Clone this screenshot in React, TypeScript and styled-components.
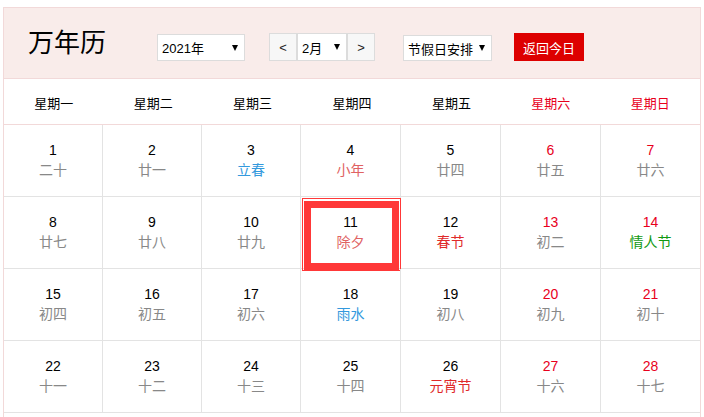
import React from 'react';
import styled, { createGlobalStyle } from 'styled-components';

const GlobalStyle = createGlobalStyle`
	body {
		margin: 0;
		font-family: 'Liberation Sans', 'Noto Sans CJK SC', sans-serif;
		color: #000;
		background: #fff;
	}
`;

const Page = styled.div`
	padding: 7px 3px 0 3px;
`;

const Calendar = styled.div`
	width: 698px;
	box-sizing: border-box;
	border: 1px solid #f2d9d9;
	border-bottom: none;
	padding-bottom: 20px;
`;

const Header = styled.div`
	height: 71px;
	display: flex;
	align-items: flex-end;
	padding: 0 0 17px 24px;
	box-sizing: border-box;
	background: #f9ecea;
	border-bottom: 1px solid #f2d9d9;
`;

const Title = styled.h1`
	margin: 0 0 3px 0;
	font-size: 26px;
	line-height: 30px;
	font-weight: normal;
	letter-spacing: 0;
`;

const Select = styled.div<{ w: number; ml: number; h?: number }>`
	display: flex;
	align-items: center;
	justify-content: space-between;
	box-sizing: border-box;
	width: ${(p) => p.w}px;
	height: ${(p) => p.h || 27}px;
	margin-left: ${(p) => p.ml}px;
	padding: 0 6px 0 4px;
	background: #fff;
	border: 1px solid #dcdcdc;
	font-size: 13px;
`;

const Arrow = styled.span`
	width: 0;
	height: 0;
	border-left: 3.5px solid transparent;
	border-right: 3.5px solid transparent;
	border-top: 6px solid #000;
`;

const MonthGroup = styled.div`
	display: flex;
	margin-left: 24px;
`;

const StepButton = styled.div`
	width: 28px;
	height: 28px;
	box-sizing: border-box;
	display: flex;
	align-items: center;
	justify-content: center;
	background: #f7f7f7;
	border: 1px solid #dcdcdc;
	font-size: 13px;
	color: #222;
`;

const TodayButton = styled.div`
	margin-left: 22px;
	width: 70px;
	height: 28px;
	display: flex;
	align-items: center;
	justify-content: center;
	background: #dd0000;
	color: #fff;
	font-size: 13px;
`;

const WeekRow = styled.div`
	display: grid;
	grid-template-columns: repeat(7, 1fr);
	height: 46px;
	border-bottom: 1px solid #f2d9d9;
	box-sizing: border-box;
`;

const WeekName = styled.div<{ weekend: boolean }>`
	display: flex;
	align-items: center;
	justify-content: center;
	font-size: 13px;
	padding-top: 1px;
	color: ${(p) => (p.weekend ? '#e8001c' : '#000')};
`;

const DayGrid = styled.div`
	display: grid;
	grid-template-columns: 99px 99px 99px 100px 100px 100px 99px;
`;

const Cell = styled.div<{ today: boolean }>`
	position: relative;
	height: 72px;
	box-sizing: border-box;
	border-right: 1px solid #e3e3e3;
	border-bottom: 1px solid #e3e3e3;
	display: flex;
	flex-direction: column;
	align-items: center;
	justify-content: center;
	padding-bottom: 1px;
	&:nth-child(7n) {
		border-right: none;
	}
	${(p) =>
		p.today &&
		`
		&::before {
			content: '';
			position: absolute;
			left: 1px;
			top: 1px;
			width: 99px;
			height: 73px;
			box-sizing: border-box;
			border: 1px solid #ff3838;
		}
		&::after {
			content: '';
			position: absolute;
			left: 3px;
			top: 4px;
			width: 95px;
			height: 69px;
			box-sizing: border-box;
			border: 7px solid #ff3838;
		}
	`}
`;

const DayNum = styled.div<{ weekend: boolean }>`
	font-size: 14px;
	line-height: 20px;
	color: ${(p) => (p.weekend ? '#e8001c' : '#000')};
`;

const kindColor: Record<string, string> = {
	normal: '#888',
	term: '#3399dd',
	soft: '#e06262',
	fest: '#e02a2a',
	green: '#119911',
};

const Lunar = styled.div<{ kind: string }>`
	font-size: 14px;
	line-height: 20px;
	color: ${(p) => kindColor[p.kind]};
`;

const weekNames = ['星期一', '星期二', '星期三', '星期四', '星期五', '星期六', '星期日'];

const days: [string, string][] = [
	['二十', 'normal'], ['廿一', 'normal'], ['立春', 'term'], ['小年', 'soft'], ['廿四', 'normal'], ['廿五', 'normal'], ['廿六', 'normal'],
	['廿七', 'normal'], ['廿八', 'normal'], ['廿九', 'normal'], ['除夕', 'soft'], ['春节', 'fest'], ['初二', 'normal'], ['情人节', 'green'],
	['初四', 'normal'], ['初五', 'normal'], ['初六', 'normal'], ['雨水', 'term'], ['初八', 'normal'], ['初九', 'normal'], ['初十', 'normal'],
	['十一', 'normal'], ['十二', 'normal'], ['十三', 'normal'], ['十四', 'normal'], ['元宵节', 'fest'], ['十六', 'normal'], ['十七', 'normal'],
];

export default function App(): JSX.Element {
	return (
		<Page>
			<GlobalStyle />
			<Calendar>
				<Header>
					<Title>万年历</Title>
					<Select w={88} ml={51}>
						<span>2021年</span>
						<Arrow />
					</Select>
					<MonthGroup>
						<StepButton>&lt;</StepButton>
						<Select w={50} ml={0} h={28}>
							<span>2月</span>
							<Arrow />
						</Select>
						<StepButton>&gt;</StepButton>
					</MonthGroup>
					<Select w={89} ml={28} h={26}>
						<span>节假日安排</span>
						<Arrow />
					</Select>
					<TodayButton>返回今日</TodayButton>
				</Header>
				<WeekRow>
					{weekNames.map((n, i) => (
						<WeekName key={n} weekend={i >= 5}>
							{n}
						</WeekName>
					))}
				</WeekRow>
				<DayGrid>
					{days.map(([lunar, kind], i) => (
						<Cell key={i} today={i === 10}>
							<DayNum weekend={i % 7 >= 5}>{i + 1}</DayNum>
							<Lunar kind={kind}>{lunar}</Lunar>
						</Cell>
					))}
				</DayGrid>
			</Calendar>
		</Page>
	);
}
